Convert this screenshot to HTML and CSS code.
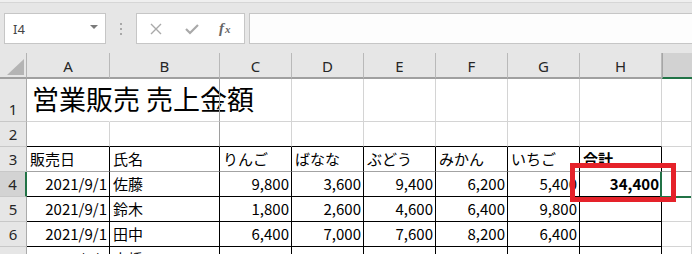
FILE: index.html
```html
<!DOCTYPE html>
<html lang="ja">
<head>
    <meta charset="UTF-8">
    <meta name="viewport" content="width=device-width, initial-scale=1.0">
    <title>営業販売 売上金額</title>
    <link rel="stylesheet" href="styles.css">
</head>
<body>
    <div class="toolbar">
        <div class="namebox">
            <span class="ref">I4</span>
            <span class="caret"></span>
        </div>
        <div class="grip"><i></i><i></i><i></i></div>
        <div class="fxbox">
            <svg class="ico" width="14" height="12" viewBox="0 0 14 12">
                <path d="M2 1 L12 11 M12 1 L2 11" stroke="#a9a9a9" stroke-width="1.4" fill="none"/>
            </svg>
            <svg class="ico" width="14" height="12" viewBox="0 0 14 12">
                <path d="M1 6 L5 10 L13 2" stroke="#a9a9a9" stroke-width="2.2" fill="none"/>
            </svg>
            <span class="fx">f<sub>x</sub></span>
        </div>
        <div class="formula"></div>
    </div>

    <div class="sheet">
        <!-- column headers -->
        <div class="corner">
            <svg width="27" height="26" viewBox="0 0 27 26"><polygon points="7,22 24,6 24,22" fill="#b4b4b4"/></svg>
        </div>
        <div class="ch">A</div>
        <div class="ch">B</div>
        <div class="ch">C</div>
        <div class="ch">D</div>
        <div class="ch">E</div>
        <div class="ch">F</div>
        <div class="ch">G</div>
        <div class="ch">H</div>
        <div class="ch active"></div>

        <!-- row 1 -->
        <div class="rh">1</div>
        <div class="cell open"><span class="title">営業販売 売上金額</span></div>
        <div class="cell open freeze-r"></div>
        <div class="cell"></div>
        <div class="cell"></div>
        <div class="cell"></div>
        <div class="cell"></div>
        <div class="cell"></div>
        <div class="cell"></div>
        <div class="cell"></div>

        <!-- row 2 -->
        <div class="rh">2</div>
        <div class="cell edge-b"></div>
        <div class="cell edge-b freeze-r"></div>
        <div class="cell edge-b"></div>
        <div class="cell edge-b"></div>
        <div class="cell edge-b"></div>
        <div class="cell edge-b"></div>
        <div class="cell edge-b"></div>
        <div class="cell edge-b"></div>
        <div class="cell"></div>

        <!-- row 3 -->
        <div class="rh">3</div>
        <div class="cell box freeze-b">販売日</div>
        <div class="cell box freeze-b">氏名</div>
        <div class="cell box freeze-b">りんご</div>
        <div class="cell box freeze-b">ばなな</div>
        <div class="cell box freeze-b">ぶどう</div>
        <div class="cell box freeze-b">みかん</div>
        <div class="cell box freeze-b">いちご</div>
        <div class="cell box freeze-b bold">合計</div>
        <div class="cell freeze-b"></div>

        <!-- row 4 -->
        <div class="rh active">4</div>
        <div class="cell box num">2021/9/1</div>
        <div class="cell box">佐藤</div>
        <div class="cell box num">9,800</div>
        <div class="cell box num">3,600</div>
        <div class="cell box num">9,400</div>
        <div class="cell box num">6,200</div>
        <div class="cell box num">5,400</div>
        <div class="cell box num bold">34,400</div>
        <div class="cell selected"></div>

        <!-- row 5 -->
        <div class="rh">5</div>
        <div class="cell box num">2021/9/1</div>
        <div class="cell box">鈴木</div>
        <div class="cell box num">1,800</div>
        <div class="cell box num">2,600</div>
        <div class="cell box num">4,600</div>
        <div class="cell box num">6,400</div>
        <div class="cell box num">9,800</div>
        <div class="cell box num"></div>
        <div class="cell"></div>

        <!-- row 6 -->
        <div class="rh">6</div>
        <div class="cell box num">2021/9/1</div>
        <div class="cell box">田中</div>
        <div class="cell box num">6,400</div>
        <div class="cell box num">7,000</div>
        <div class="cell box num">7,600</div>
        <div class="cell box num">8,200</div>
        <div class="cell box num">6,400</div>
        <div class="cell box num"></div>
        <div class="cell"></div>

        <!-- row 7 -->
        <div class="rh">7</div>
        <div class="cell box num">2021/9/1</div>
        <div class="cell box">高橋</div>
        <div class="cell box num"></div>
        <div class="cell box num"></div>
        <div class="cell box num"></div>
        <div class="cell box num"></div>
        <div class="cell box num"></div>
        <div class="cell box num"></div>
        <div class="cell"></div>

        <div class="callout"></div>
    </div>
</body>
</html>
```

FILE: styles.css
```css
body {
    margin: 0;
    width: 692px;
    height: 254px;
    overflow: hidden;
    background: #ffffff;
    font-family: 'Noto Sans CJK JP', 'Noto Sans', sans-serif;
    color: #000000;
}

/* formula bar */
.toolbar {
    height: 53px;
    box-sizing: border-box;
    padding-top: 13px;
    display: flex;
    align-items: flex-start;
    background: linear-gradient(#efefef 0 2px, #d6d6d6 2px 3px, #e6e6e6 3px);
}

.namebox {
    margin-left: 4px;
    width: 102px;
    height: 31px;
    box-sizing: border-box;
    border: 1px solid #c6c6c6;
    background: #ffffff;
    display: flex;
    align-items: center;
    justify-content: space-between;
    padding: 0 7px 0 8px;
}

.ref {
    font-family: 'Noto Sans', sans-serif;
    font-size: 13px;
    color: #444444;
}

.caret {
    width: 0;
    height: 0;
    border-left: 4px solid transparent;
    border-right: 4px solid transparent;
    border-top: 4px solid #7a7a7a;
    margin-top: -4px;
}

.grip {
    width: 30px;
    height: 31px;
    display: flex;
    flex-direction: column;
    align-items: center;
    justify-content: center;
    gap: 3px;
}

.grip i {
    width: 2px;
    height: 2px;
    background: #a8a8a8;
}

.fxbox {
    width: 109px;
    height: 31px;
    box-sizing: border-box;
    border: 1px solid #c6c6c6;
    background: #ffffff;
    display: flex;
    align-items: center;
    padding-left: 12px;
    gap: 22px;
}

.fx {
    font-family: 'Liberation Serif', serif;
    font-style: italic;
    font-weight: bold;
    font-size: 15px;
    color: #666666;
    margin-left: -2px;
}

.fx sub {
    font-size: 11px;
    vertical-align: 0;
    margin-left: 1px;
}

.formula {
    margin-left: 4px;
    flex: 1;
    height: 31px;
    box-sizing: border-box;
    border: 1px solid #c6c6c6;
    border-right: none;
    background: #fdfdfd;
}

/* grid */
.sheet {
    position: relative;
    display: grid;
    grid-template-columns: 27px 83px 110px 72px 72px 72px 72px 72px 82px 30px;
    grid-template-rows: 26px 43px 25px 25px 25px 25px 25px 25px;
}

.corner, .ch, .rh {
    box-sizing: border-box;
    background: #e6e6e6;
    font-family: 'Noto Sans', sans-serif;
    font-size: 15px;
    color: #262626;
}

.corner {
    border-right: 1px solid #b3b3b3;
    border-bottom: 2px solid #a0a0a0;
}

.corner svg {
    display: block;
}

.ch {
    border-right: 1px solid #b9b9b9;
    border-bottom: 2px solid #a0a0a0;
    display: flex;
    align-items: center;
    justify-content: center;
    padding-top: 1px;
}

.ch.active {
    background: #d2d2d2;
    border-left: 1px solid #a6a6a6;
    border-right: none;
    border-bottom-color: #217346;
}

.rh {
    border-right: 1px solid #ababab;
    border-bottom: 1px solid #c8c8c8;
    display: flex;
    align-items: flex-end;
    justify-content: center;
    line-height: 24px;
}

.rh.active {
    background: #d3d3d3;
    border-right: 2px solid #217346;
}

.cell {
    box-sizing: border-box;
    border-right: 1px solid #d4d4d4;
    border-bottom: 1px solid #d4d4d4;
    display: flex;
    align-items: flex-end;
    padding: 0 3px;
    font-size: 15px;
    line-height: 24px;
    white-space: nowrap;
}

.cell.open {
    border-right-color: transparent;
}

.cell.freeze-r {
    border-right-color: #9e9e9e;
}

.cell.edge-b {
    border-bottom-color: #000000;
}

.cell.box {
    border-right-color: #000000;
    border-bottom-color: #000000;
}

.cell.freeze-b {
    border-bottom-color: #a3a3a3;
}

.num {
    justify-content: flex-end;
    padding-right: 2px;
}

.bold {
    font-weight: bold;
}

.title {
    font-size: 27px;
    line-height: 36px;
    padding-left: 2px;
    padding-bottom: 4px;
}

/* active cell I4 */
.selected {
    position: relative;
    z-index: 2;
}

.selected::before {
    content: "";
    position: absolute;
    left: -2px;
    top: 0;
    bottom: -2px;
    width: 2px;
    background: #217346;
}

.selected::after {
    content: "";
    position: absolute;
    left: -2px;
    right: 0;
    bottom: -2px;
    height: 2px;
    background: #217346;
}

/* red highlight around H4 */
.callout {
    position: absolute;
    left: 570px;
    top: 110px;
    width: 106px;
    height: 39px;
    box-sizing: border-box;
    border: 5px solid #e5222a;
    z-index: 3;
}
```
